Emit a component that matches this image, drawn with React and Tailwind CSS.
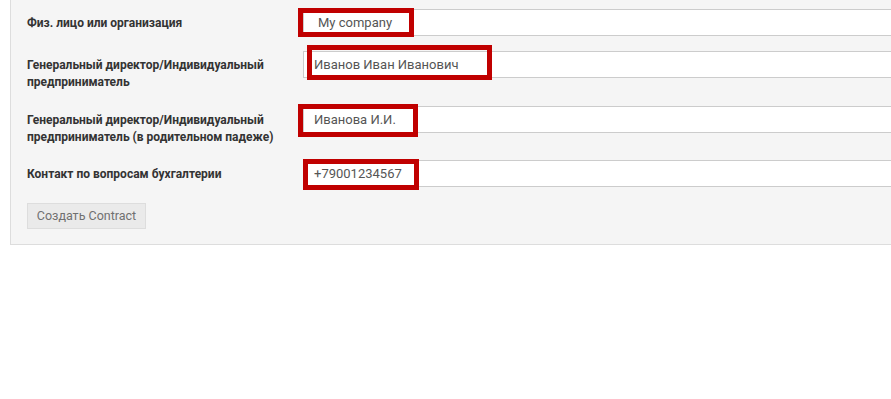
import React from "react";

const rows = [
  { label: ["Физ. лицо или организация"], value: "My company", extra: true, mb: "mb-[15px]" },
  { label: ["Генеральный директор/Индивидуальный", "предприниматель"], value: "Иванов Иван Иванович", mb: "mb-[15px]" },
  { label: ["Генеральный директор/Индивидуальный", "предприниматель (в родительном падеже)"], value: "Иванова И.И.", mb: "mb-[14px]" },
  { label: ["Контакт по вопросам бухгалтерии"], value: "+79001234567", mb: "mb-[16px]" },
];

const boxes = [
  "left-[298px] top-[8px] w-[116px] h-[29px]",
  "left-[307px] top-[45px] w-[185px] h-[35px]",
  "left-[298px] top-[104px] w-[120px] h-[33px]",
  "left-[303px] top-[159px] w-[116px] h-[31px]",
];

export default function App() {
  return (
    <div
      className="relative w-[891px] h-[399px] overflow-hidden bg-white"
      style={{ fontFamily: "Roboto, 'Liberation Sans', sans-serif" }}
    >
      <div className="ml-[10px] w-[900px] bg-[#f5f5f5] border-l border-b border-[#dddddd] pt-[9px] pb-[15px] pl-[16px]">
        {rows.map((r, i) => (
          <div key={i} className={`flex ${r.mb}`}>
            <div className="w-[276px] pt-[6px] text-[12px] leading-[17px] font-bold text-[#333333]">
              {r.label.map((l, j) => (
                <div key={j}>{l}</div>
              ))}
            </div>
            <div className="flex-1 h-[27px] bg-white border border-r-0 border-[#cccccc] flex items-center text-[13px] text-[#555555]">
              <span className={r.extra ? "pl-[14px]" : "pl-[10px]"}>{r.value}</span>
            </div>
          </div>
        ))}
        <button className="h-[26px] w-[119px] bg-[#eaeaea] border border-[#dddddd] text-[12.5px] text-[#707070]">
          Создать Contract
        </button>
      </div>
      {boxes.map((b, i) => (
        <div key={i} className={`absolute border-[5px] border-[#c00000] ${b}`} />
      ))}
    </div>
  );
}
